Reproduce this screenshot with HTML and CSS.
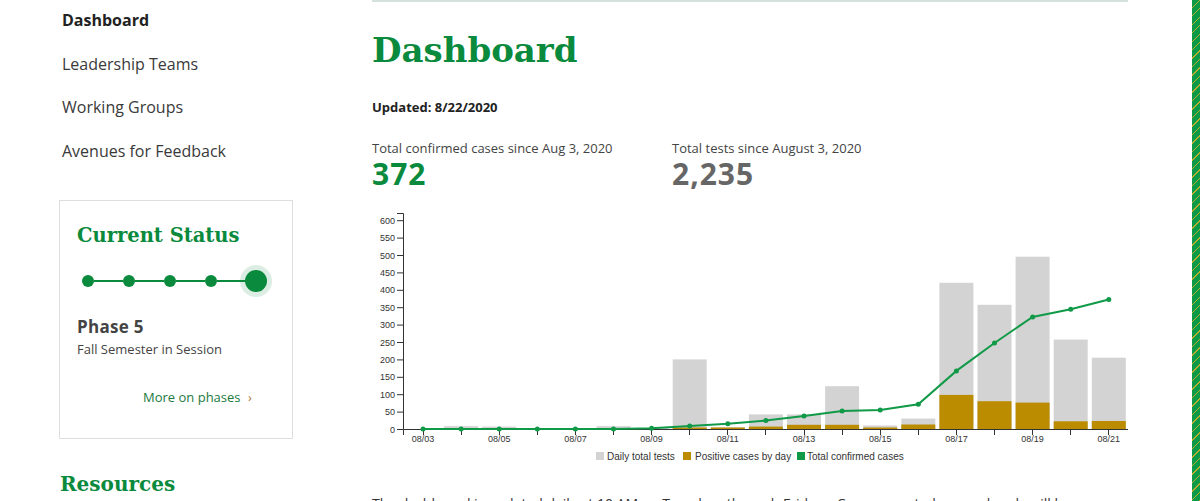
FILE: index.html
```html
<!DOCTYPE html>
<html>
<head>
<meta charset="utf-8">
<link rel="stylesheet" href="styles.css">
</head>
<body>
<div class="page">
  <aside class="sidebar">
    <ul class="nav">
      <li class="nav-item active">Dashboard</li>
      <li class="nav-item">Leadership Teams</li>
      <li class="nav-item">Working Groups</li>
      <li class="nav-item">Avenues for Feedback</li>
    </ul>
    <div class="status-card">
      <h2 class="slab card-title">Current Status</h2>
      <div class="steps">
        <span class="dot"></span><span class="seg"></span>
        <span class="dot"></span><span class="seg"></span>
        <span class="dot"></span><span class="seg"></span>
        <span class="dot"></span><span class="seg"></span>
        <span class="dot big"></span>
      </div>
      <div class="phase">Phase 5</div>
      <div class="phase-desc">Fall Semester in Session</div>
      <div class="more">More on phases <span class="chev">›</span></div>
    </div>
    <h2 class="slab resources">Resources</h2>
  </aside>
  <main class="main">
    <h1 class="slab title">Dashboard</h1>
    <div class="updated">Updated: 8/22/2020</div>
    <div class="stats">
      <div class="stat">
        <div class="stat-label">Total confirmed cases since Aug 3, 2020</div>
        <div class="stat-value green">372</div>
      </div>
      <div class="stat">
        <div class="stat-label">Total tests since August 3, 2020</div>
        <div class="stat-value gray">2,235</div>
      </div>
    </div>
    <svg class="chart" width="756" height="256" viewBox="0 0 756 256">
      <g class="bars-tests" fill="#d3d3d3">
        <rect x="72.1" y="216.2" width="34" height="2.8"/>
        <rect x="110.2" y="216.6" width="34" height="2.4"/>
        <rect x="148.3" y="218" width="34" height="1"/>
        <rect x="224.5" y="216.2" width="34" height="2.8"/>
        <rect x="262.6" y="218" width="34" height="1"/>
        <rect x="300.7" y="149.4" width="34" height="69.6"/>
        <rect x="338.8" y="217.3" width="34" height="1.7"/>
        <rect x="376.9" y="204.4" width="34" height="14.6"/>
        <rect x="415" y="204.4" width="34" height="14.6"/>
        <rect x="453.1" y="176.2" width="34" height="42.8"/>
        <rect x="491.2" y="215.5" width="34" height="3.5"/>
        <rect x="529.3" y="208.6" width="34" height="10.4"/>
        <rect x="567.4" y="72.8" width="34" height="146.2"/>
        <rect x="605.5" y="94.8" width="34" height="124.2"/>
        <rect x="643.6" y="46.7" width="34" height="172.3"/>
        <rect x="681.7" y="129.6" width="34" height="89.4"/>
        <rect x="719.8" y="147.7" width="34" height="71.3"/>
      </g>
      <g class="bars-pos" fill="#bb8c00">
        <rect x="300.7" y="217.5" width="34" height="1.5"/>
        <rect x="338.8" y="217.5" width="34" height="1.5"/>
        <rect x="376.9" y="216.6" width="34" height="2.4"/>
        <rect x="415" y="214.8" width="34" height="4.2"/>
        <rect x="453.1" y="214.8" width="34" height="4.2"/>
        <rect x="491.2" y="217.5" width="34" height="1.5"/>
        <rect x="529.3" y="214.5" width="34" height="4.5"/>
        <rect x="567.4" y="184.9" width="34" height="34.1"/>
        <rect x="605.5" y="191.2" width="34" height="27.8"/>
        <rect x="643.6" y="192.6" width="34" height="26.4"/>
        <rect x="681.7" y="211.3" width="34" height="7.7"/>
        <rect x="719.8" y="211" width="34" height="8"/>
      </g>
      <g class="axis" stroke="#333" stroke-width="1" fill="none">
        <path d="M25,3.5H31.5V219.5"/>
        <path d="M31.5,225V219.5H756.5V225"/>
        <path d="M25,219.5H31 M25,202.1H31 M25,184.7H31 M25,167.3H31 M25,149.9H31 M25,132.5H31 M25,115.1H31 M25,97.7H31 M25,80.3H31 M25,62.9H31 M25,45.5H31 M25,28.1H31 M25,10.7H31"/>
        <path d="M51.5,219V225 M89.5,219V225 M127.5,219V225 M165.5,219V225 M203.5,219V225 M241.5,219V225 M279.5,219V225 M317.5,219V225 M355.5,219V225 M393.5,219V225 M432.5,219V225 M470.5,219V225 M508.5,219V225 M546.5,219V225 M584.5,219V225 M622.5,219V225 M660.5,219V225 M698.5,219V225 M736.5,219V225"/>
      </g>
      <g class="ylabels" text-anchor="end">
        <text x="23" y="222.5">0</text>
        <text x="23" y="205.1">50</text>
        <text x="23" y="187.7">100</text>
        <text x="23" y="170.3">150</text>
        <text x="23" y="152.9">200</text>
        <text x="23" y="135.5">250</text>
        <text x="23" y="118.1">300</text>
        <text x="23" y="100.7">350</text>
        <text x="23" y="83.3">400</text>
        <text x="23" y="65.9">450</text>
        <text x="23" y="48.5">500</text>
        <text x="23" y="31.1">550</text>
        <text x="23" y="13.7">600</text>
      </g>
      <g class="xlabels" text-anchor="middle">
        <text x="51" y="232">08/03</text>
        <text x="127.2" y="232">08/05</text>
        <text x="203.4" y="232">08/07</text>
        <text x="279.6" y="232">08/09</text>
        <text x="355.8" y="232">08/11</text>
        <text x="432" y="232">08/13</text>
        <text x="508.2" y="232">08/15</text>
        <text x="584.4" y="232">08/17</text>
        <text x="660.6" y="232">08/19</text>
        <text x="736.8" y="232">08/21</text>
      </g>
      <polyline fill="none" stroke="#109a47" stroke-width="2" points="51,219 89.1,219 127.2,219 165.3,219 203.4,219 241.5,219 279.6,218.3 317.7,215.9 355.8,213.8 393.9,210.6 432,206.1 470.1,200.9 508.2,199.9 546.3,194.3 584.4,160.9 622.5,133 660.6,106.9 698.7,99.3 736.8,89.5"/>
      <g class="points" fill="#109a47">
        <circle cx="51" cy="219" r="2.5"/>
        <circle cx="89.1" cy="219" r="2.5"/>
        <circle cx="127.2" cy="219" r="2.5"/>
        <circle cx="165.3" cy="219" r="2.5"/>
        <circle cx="203.4" cy="219" r="2.5"/>
        <circle cx="241.5" cy="219" r="2.5"/>
        <circle cx="279.6" cy="218.3" r="2.5"/>
        <circle cx="317.7" cy="215.9" r="2.5"/>
        <circle cx="355.8" cy="213.8" r="2.5"/>
        <circle cx="393.9" cy="210.6" r="2.5"/>
        <circle cx="432" cy="206.1" r="2.5"/>
        <circle cx="470.1" cy="200.9" r="2.5"/>
        <circle cx="508.2" cy="199.9" r="2.5"/>
        <circle cx="546.3" cy="194.3" r="2.5"/>
        <circle cx="584.4" cy="160.9" r="2.5"/>
        <circle cx="622.5" cy="133" r="2.5"/>
        <circle cx="660.6" cy="106.9" r="2.5"/>
        <circle cx="698.7" cy="99.3" r="2.5"/>
        <circle cx="736.8" cy="89.5" r="2.5"/>
      </g>
      <g class="legend">
        <rect x="224" y="242" width="8" height="8" fill="#d3d3d3"/>
        <text x="235" y="249.5">Daily total tests</text>
        <rect x="311" y="242" width="8" height="8" fill="#bb8c00"/>
        <text x="323" y="249.5">Positive cases by day</text>
        <rect x="425" y="242" width="8" height="8" fill="#109a47"/>
        <text x="435" y="249.5">Total confirmed cases</text>
      </g>
    </svg>
    <p class="intro">The dashboard is updated daily at 10 AM on Tuesdays through Fridays. Cases reported on weekends will be reflected in the Wednesday update.</p>
  </main>
  <div class="stripe"></div>
</div>
</body>
</html>
```

FILE: styles.css
```css
html, body {
  margin: 0;
  padding: 0;
  background: #fff;
  overflow: hidden;
}
body {
  font-family: "Open Sans", "Liberation Sans", sans-serif;
  color: #333;
  width: 1200px;
  height: 501px;
}
.page {
  display: flex;
  align-items: stretch;
  width: 1200px;
  height: 501px;
  overflow: hidden;
}
.slab {
  font-family: "DejaVu Serif", "Liberation Serif", serif;
  font-weight: bold;
  color: #0a8a3c;
  margin: 0;
}
.sidebar {
  width: 234px;
  margin-left: 59px;
  flex-shrink: 0;
}
.nav {
  list-style: none;
  margin: -1px 0 0 0;
  padding: 0 0 0 3px;
}
.nav-item {
  font-size: 16px;
  line-height: 43.7px;
  color: #3a3a3a;
}
.nav-item.active {
  font-weight: bold;
  color: #222;
}
.status-card {
  margin-top: 26px;
  border: 1px solid #dedede;
  height: 237px;
  padding: 0 0 0 17px;
}
.card-title {
  font-size: 19.5px;
  line-height: 26px;
  margin-top: 22px;
}
.steps {
  display: flex;
  align-items: center;
  margin-top: 15px;
  margin-left: 5px;
  height: 34px;
}
.dot {
  width: 12px;
  height: 12px;
  border-radius: 50%;
  background: #0a8a3c;
  flex-shrink: 0;
}
.seg {
  width: 29px;
  height: 2px;
  background: #0a8a3c;
}
.dot.big {
  width: 22px;
  height: 22px;
  box-shadow: 0 0 0 5px rgba(10, 138, 60, 0.14);
  margin-left: -1px;
}
.phase {
  font-weight: bold;
  font-size: 17px;
  letter-spacing: 0.3px;
  color: #444;
  margin-top: 17px;
  line-height: 24px;
}
.phase-desc {
  font-size: 13px;
  color: #444;
  line-height: 20px;
  margin-top: 0;
}
.more {
  font-size: 13px;
  color: #1b7a3e;
  margin-top: 28px;
  margin-left: 66px;
  line-height: 20px;
}
.chev {
  color: #b07a3a;
  margin-left: 4px;
}
.resources {
  font-size: 20px;
  margin-top: 33px;
  margin-left: 1px;
}
.main {
  width: 756px;
  margin-left: 79px;
  flex-shrink: 0;
  border-top: 2px solid #d3e0dd;
  display: flex;
  flex-direction: column;
}
.main > * {
  flex-shrink: 0;
}
.title {
  font-size: 34px;
  line-height: 40px;
  margin-top: 28px;
}
.updated {
  font-weight: bold;
  font-size: 13px;
  color: #222;
  margin-top: 28px;
  line-height: 18px;
}
.stats {
  display: flex;
  margin-top: 23px;
}
.stat {
  width: 300px;
}
.stat-label {
  font-size: 13px;
  line-height: 18px;
  color: #444;
}
.stat-value {
  font-weight: bold;
  font-size: 30px;
  letter-spacing: 1px;
  line-height: 34px;
}
.stat-value.green { color: #0a8a3c; }
.stat-value.gray { color: #666; }
.chart {
  display: block;
  margin-top: 19px;
  font-family: "Liberation Sans", Arial, sans-serif;
}
.ylabels text, .xlabels text {
  font-size: 9px;
  fill: #333;
}
.legend text {
  font-size: 10px;
  fill: #333;
}
.intro {
  margin: 28px 0 0 0;
  font-size: 14px;
  line-height: 20px;
  color: #333;
}
.stripe {
  flex: 0 0 8px;
  margin-left: auto;
  width: 8px;
  background-color: #0c9a48;
  background-image: repeating-linear-gradient(135deg, transparent 0px, transparent 5px, rgba(214, 178, 40, 0.85) 5px, rgba(214, 178, 40, 0.85) 6px);
}
```
